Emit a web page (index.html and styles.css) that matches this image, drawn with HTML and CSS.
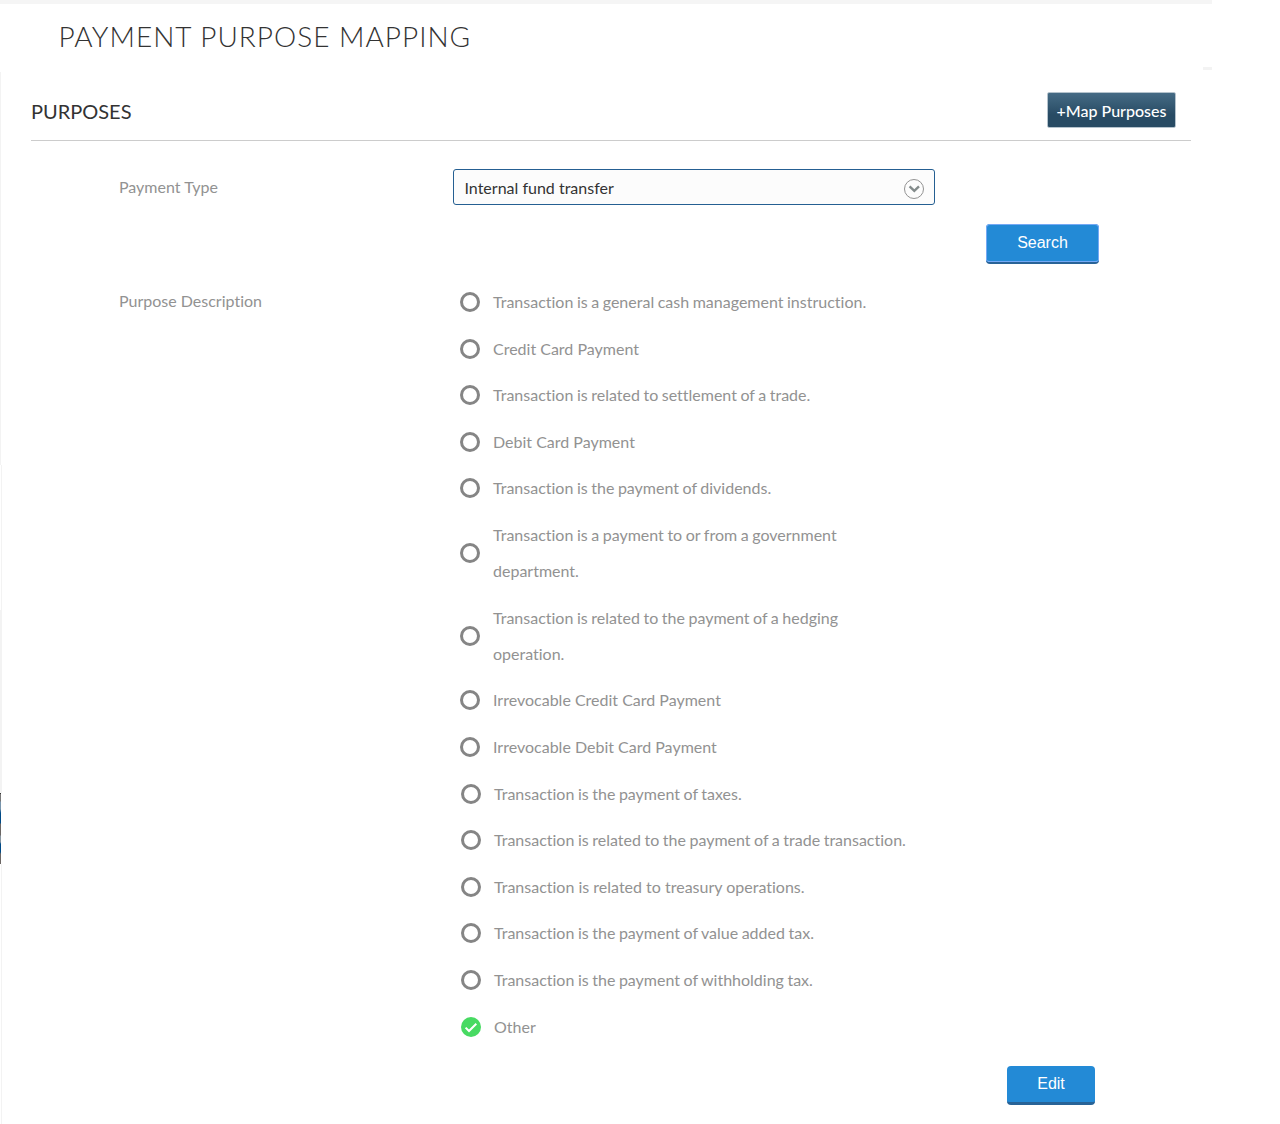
FILE: index.html
```html
<!DOCTYPE html>
<html lang="en">
<head>
<meta charset="utf-8">
<title>Payment Purpose Mapping</title>
<link rel="stylesheet" href="styles.css">
</head>
<body>
<div class="edge" aria-hidden="true">
  <i class="edge-top"></i><i class="edge-mid"></i><i class="edge-wide"></i><i class="edge-photo"></i><i class="edge-end"></i>
</div>
<div class="page">
  <header class="page-header">
    <h1 class="page-title">PAYMENT PURPOSE MAPPING</h1>
    <span class="header-tab"></span>
  </header>
  <main class="panel">
    <div class="panel-head">
      <h2 class="panel-title">PURPOSES</h2>
      <button class="map-button" type="button">+Map Purposes</button>
    </div>
    <div class="field-row">
      <span class="label">Payment Type</span>
      <div class="select">
        <span>Internal fund transfer</span>
        <svg class="select-icon" width="20" height="20" viewBox="0 0 20 20" fill="none"><circle cx="10" cy="10" r="9.5" stroke="#929292"/><path d="M5.6 7.4 10.3 11.9 15 7.4" stroke="#838b8b" stroke-width="2.4"/></svg>
      </div>
    </div>
    <div class="search-row"><button class="button search" type="button">Search</button></div>
    <div class="purpose-row">
      <span class="label purpose-label">Purpose Description</span>
      <div class="options">
        <div class="option sentence"><i class="radio"></i><span>Transaction is a general cash management instruction.</span></div>
        <div class="option"><i class="radio"></i><span>Credit Card Payment</span></div>
        <div class="option sentence"><i class="radio"></i><span>Transaction is related to settlement of a trade.</span></div>
        <div class="option"><i class="radio"></i><span>Debit Card Payment</span></div>
        <div class="option sentence"><i class="radio"></i><span>Transaction is the payment of dividends.</span></div>
        <div class="option sentence"><i class="radio"></i><span>Transaction is a payment to or from a government department.</span></div>
        <div class="option sentence"><i class="radio"></i><span>Transaction is related to the payment of a hedging operation.</span></div>
        <div class="option"><i class="radio"></i><span>Irrevocable Credit Card Payment</span></div>
        <div class="option"><i class="radio"></i><span>Irrevocable Debit Card Payment</span></div>
        <div class="option sentence shifted"><i class="radio"></i><span>Transaction is the payment of taxes.</span></div>
        <div class="option sentence shifted"><i class="radio"></i><span>Transaction is related to the payment of a trade transaction.</span></div>
        <div class="option shifted"><i class="radio"></i><span>Transaction is related to treasury operations.</span></div>
        <div class="option sentence shifted"><i class="radio"></i><span>Transaction is the payment of value added tax.</span></div>
        <div class="option sentence shifted"><i class="radio"></i><span>Transaction is the payment of withholding tax.</span></div>
        <div class="option shifted"><svg class="check" width="20" height="20" viewBox="0 0 20 20" fill="none"><circle cx="10" cy="10" r="10" fill="#47da62"/><path d="M4.6 10.6 8 14 15.3 6.7" stroke="#fff" stroke-width="2"/></svg><span>Other</span></div>
      </div>
    </div>
    <div class="edit-row"><button class="button edit" type="button">Edit</button></div>
  </main>
</div>
</body>
</html>
```
FILE: styles.css
```css
* { box-sizing: border-box; }
body {
  margin: 0;
  height: 1124px;
  overflow: hidden;
  background: #fff;
  color: #333;
  font: 16px/36px Lato, sans-serif;
  font-variant-ligatures: none;
}
h1, h2 { margin: 0; font-weight: 400; }
button { padding: 0; color: #fff; }

/* Sliver of the page backdrop behind the panel's left side */
.edge {
  position: absolute;
  left: 0;
  top: 72px;
  width: 2px;
}
.edge i { display: block; background: #f3f3f3; }
.edge .edge-top { width: 1px; height: 393px; }
.edge .edge-mid { height: 145px; background: linear-gradient(90deg, #fff 50%, #f3f3f3 50%); }
.edge-wide { height: 183px; }
.edge .edge-photo {
  width: 1px;
  height: 71px;
  background: linear-gradient(#333 0 1px, #777 1px 8px, #7895ac 9px 16px, #004a87 20px 30px, #6b6664 31px 42px, #8796a2 43px 49px, #004a87 51px 59px, #6b6664 61px);
}
.edge .edge-end { height: 260px; background: linear-gradient(90deg, #fff 50%, #f3f3f3 50%); }

.page { width: 1212px; }
.page-header {
  display: flex;
  justify-content: space-between;
  height: 70px;
  padding-left: 58.5px;
  border-top: 4px solid #f5f5f5;
}
.page-title {
  padding-top: 14px;
  font-size: 28px;
  font-weight: 300;
  letter-spacing: 1px;
}
.header-tab {
  align-self: flex-end;
  width: 9px;
  height: 3px;
  background: #f3f3f3;
}
.panel { margin-left: 31px; width: 1160px; }
.panel-head {
  display: flex;
  align-items: flex-start;
  justify-content: space-between;
  height: 71px;
  padding: 22px 15px 0 0;
  border-bottom: 1px solid #ccc;
}
.panel-title { padding-top: 1px; font-size: 20px; }
.map-button {
  width: 129px;
  height: 36px;
  padding-top: 1px;
  border: 1px solid #b5c3cd;
  border-radius: 2px;
  background: linear-gradient(#456b85, #284b64 65%);
  font: 500 16px/33px Lato, sans-serif;
}
.field-row { display: flex; padding: 28px 0 0 88px; }
.label { width: 334px; color: #929292; }
.select {
  display: flex;
  align-items: center;
  justify-content: space-between;
  width: 482px;
  height: 36px;
  padding: 2px 10px 0 10.5px;
  border: 1px solid #255f92;
  border-radius: 3px;
  background: #fcfcfc;
}
.select-icon { margin-top: 2px; }
.search-row { display: flex; justify-content: flex-end; padding: 19px 92px 0 0; }
.button {
  border: 0;
  border-bottom: 3px solid #286397;
  border-radius: 4px;
  background: #238ad6;
  font: 16px/34px "Liberation Sans", Arial, sans-serif;
}
.search {
  width: 113px;
  height: 40px;
  border-bottom-width: 2px;
  box-shadow: inset 0 0 0 1px #75a9f5;
  line-height: 35px;
  padding-bottom: 1px;
}
.purpose-row { display: flex; padding: 20px 0 0 88px; }
.purpose-label { margin-top: -1px; }
.options { display: flex; flex-direction: column; gap: 10.61px; padding-left: 7px; }
.option {
  display: flex;
  align-items: center;
  gap: 13px;
  width: 450px;
  color: #929292;
}
.option span { flex: 1; }
.sentence { word-spacing: -0.55px; }
.shifted { margin-left: 1px; }
.option:not(.shifted) + .shifted { margin-top: 0.1px; }
.radio {
  width: 20px;
  height: 20px;
  border: 3px solid #858585;
  border-radius: 50%;
}
.edit-row { display: flex; justify-content: flex-end; padding: 21px 96px 0 0; }
.edit { width: 88px; height: 39px; }
```
